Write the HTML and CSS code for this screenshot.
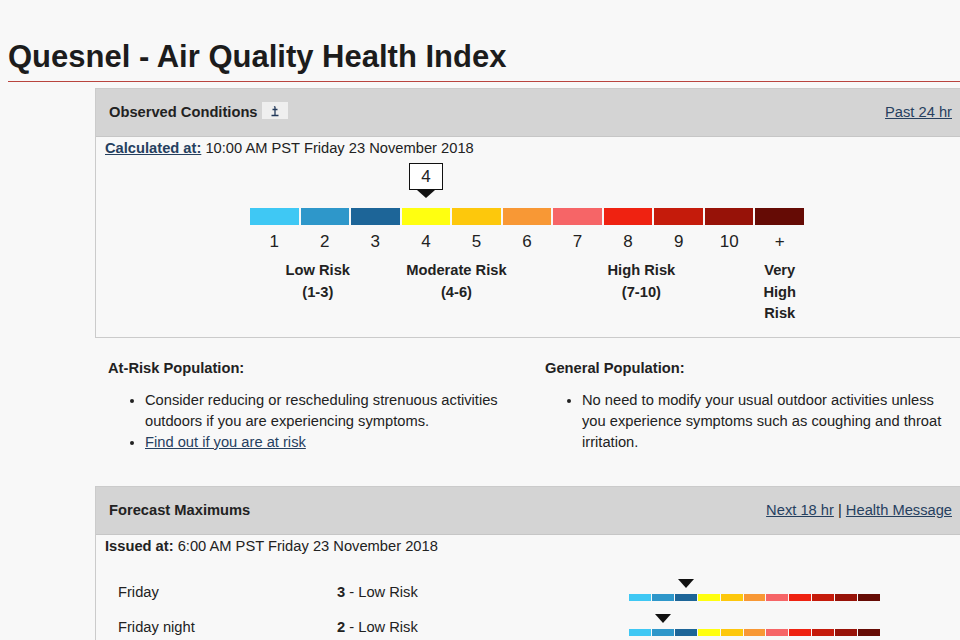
FILE: index.html
```html
<!DOCTYPE html>
<html lang="en">
<head>
  <meta charset="UTF-8">
  <meta name="viewport" content="width=device-width, initial-scale=1.0">
  <title>Quesnel - Air Quality Health Index</title>
  <link rel="stylesheet" href="styles.css">
</head>
<body>
  <div class="page">
    <h1 class="title">Quesnel - Air Quality Health Index</h1>

    <div class="content">
      <!-- observed -->
      <div class="panel">
        <div class="panel-head">
          <span class="panel-title">Observed Conditions</span>
          <span class="note-btn">
            <svg width="12" height="12" viewBox="0 0 12 12">
              <path d="M6 1.5v9M3.5 4.5h5M2.5 10.5h7M5.2 2.3l0.8-0.8" stroke="#23395a" stroke-width="1.3" fill="none"/>
            </svg>
          </span>
          <a href="#" class="panel-link">Past 24 hr</a>
        </div>
        <div class="panel-body">
          <p class="stamp"><a href="#" class="stamp-link">Calculated at:</a> 10:00 AM PST Friday 23 November 2018</p>

          <div class="scale">
            <div class="scale-row marker-row">
              <div class="marker" style="grid-column: 4">
                <div class="marker-box">4</div>
                <div class="marker-tip"></div>
              </div>
            </div>
            <div class="scale-row bar">
              <span class="c1"></span><span class="c2"></span><span class="c3"></span>
              <span class="c4"></span><span class="c5"></span><span class="c6"></span>
              <span class="c7"></span><span class="c8"></span><span class="c9"></span>
              <span class="c10"></span><span class="c11"></span>
            </div>
            <div class="scale-row numbers">
              <span>1</span><span>2</span><span>3</span><span>4</span><span>5</span><span>6</span>
              <span>7</span><span>8</span><span>9</span><span>10</span><span>+</span>
            </div>
            <div class="scale-row labels">
              <div class="label low">Low Risk<br>(1-3)</div>
              <div class="label moderate">Moderate Risk<br>(4-6)</div>
              <div class="label high">High Risk<br>(7-10)</div>
              <div class="label very-high">Very High Risk</div>
            </div>
          </div>
        </div>
      </div>

      <!-- health messages -->
      <div class="groups">
        <div class="group">
          <h2>At-Risk Population:</h2>
          <ul>
            <li>Consider reducing or rescheduling strenuous activities outdoors if you are experiencing symptoms.</li>
            <li><a href="#">Find out if you are at risk</a></li>
          </ul>
        </div>
        <div class="group">
          <h2>General Population:</h2>
          <ul>
            <li>No need to modify your usual outdoor activities unless you experience symptoms such as coughing and throat irritation.</li>
          </ul>
        </div>
      </div>

      <!-- forecast -->
      <div class="panel forecast">
        <div class="panel-head">
          <span class="panel-title">Forecast Maximums</span>
          <span class="panel-link"><a href="#">Next 18 hr</a> | <a href="#">Health Message</a></span>
        </div>
        <div class="panel-body">
          <p class="stamp"><b>Issued at:</b> 6:00 AM PST Friday 23 November 2018</p>

          <div class="fc-list">
            <div class="fc-row">
              <span>Friday</span>
              <span><b>3</b> - Low Risk</span>
              <div class="mini">
                <div class="mini-row"><span class="mini-tip" style="grid-column: 3"></span></div>
                <div class="mini-row mini-bar">
                  <span class="c1"></span><span class="c2"></span><span class="c3"></span>
                  <span class="c4"></span><span class="c5"></span><span class="c6"></span>
                  <span class="c7"></span><span class="c8"></span><span class="c9"></span>
                  <span class="c10"></span><span class="c11"></span>
                </div>
              </div>
            </div>
            <div class="fc-row">
              <span>Friday night</span>
              <span><b>2</b> - Low Risk</span>
              <div class="mini">
                <div class="mini-row"><span class="mini-tip" style="grid-column: 2"></span></div>
                <div class="mini-row mini-bar">
                  <span class="c1"></span><span class="c2"></span><span class="c3"></span>
                  <span class="c4"></span><span class="c5"></span><span class="c6"></span>
                  <span class="c7"></span><span class="c8"></span><span class="c9"></span>
                  <span class="c10"></span><span class="c11"></span>
                </div>
              </div>
            </div>
          </div>
        </div>
      </div>
    </div>
  </div>
</body>
</html>
```

FILE: styles.css
```css
html, body{
  margin: 0;
  overflow: hidden;
}
body{
  background-color: #f8f8f8;
  color: #222;
  font-family: "Liberation Sans", Arial, Helvetica, sans-serif;
  font-size: 14.7px;
  line-height: 21px;
}
a{
  color: #26405f;
}
.page{
  width: 980px;
  padding-left: 8px;
}
.title{
  margin: 39px 0 0;
  padding-bottom: 6px;
  border-bottom: 1px solid #b9443e;
  font-size: 31px;
  line-height: 36px;
  font-weight: bold;
  color: #1c1c1c;
}
.content{
  margin-left: 87px;
  width: 870px;
}

/* panels */
.panel{
  margin-top: 6px;
  border: 1px solid #cbcbcb;
}
.panel-head{
  display: flex;
  align-items: center;
  padding: 13px 12px 13px 13px;
  background-color: #d4d4d4;
  border-bottom: 1px solid #c6c6c6;
}
.panel-title{
  font-weight: bold;
}
.note-btn{
  display: flex;
  align-items: center;
  justify-content: center;
  width: 26px;
  height: 17px;
  margin-left: 4px;
  margin-top: -4px;
  background-color: #efefef;
}
.panel-link{
  margin-left: auto;
}
.panel-body{
  padding: 1px 9px 12px;
}
.stamp{
  margin: 0;
}
.stamp-link{
  font-weight: bold;
}

/* big scale */
.scale{
  margin-left: 145px;
  width: 554px;
}
.scale-row{
  display: grid;
  grid-template-columns: repeat(11, 1fr);
  column-gap: 2px;
}
.marker-row{
  margin-top: 4px;
}
.marker{
  justify-self: center;
  display: flex;
  flex-direction: column;
  align-items: center;
}
.marker-box{
  width: 34px;
  height: 27px;
  box-sizing: border-box;
  border: 1px solid #111;
  background-color: white;
  font-size: 17px;
  line-height: 25px;
  text-align: center;
}
.marker-tip{
  width: 0;
  height: 0;
  border-left: 9px solid transparent;
  border-right: 9px solid transparent;
  border-top: 8px solid #111;
}
.bar{
  margin-top: 10px;
  height: 17px;
}
.numbers{
  margin-top: 6px;
  font-size: 17px;
  text-align: center;
}
.labels{
  margin-top: 8px;
  font-weight: bold;
  line-height: 21.5px;
  text-align: center;
}
.low{
  grid-column: 1 / 4;
  padding-right: 14px;
}
.moderate{
  grid-column: 4 / 7;
  padding-right: 40px;
}
.high{
  grid-column: 7 / 11;
  padding-right: 24px;
}
.very-high{
  grid-column: 11 / 12;
}

.c1{ background-color: #3fc8f4; }
.c2{ background-color: #2e97ca; }
.c3{ background-color: #1d6598; }
.c4{ background-color: #ffff10; }
.c5{ background-color: #fdc80c; }
.c6{ background-color: #f89835; }
.c7{ background-color: #f66567; }
.c8{ background-color: #ef2211; }
.c9{ background-color: #c51b0b; }
.c10{ background-color: #971208; }
.c11{ background-color: #650b05; }

/* health messages */
.groups{
  display: grid;
  grid-template-columns: 437px 1fr;
  margin-top: 20px;
  padding: 0 10px 0 13px;
}
.group{
  padding-right: 20px;
}
.group + .group{
  padding-right: 0;
}
.group h2{
  margin: 0 0 11px;
  font-size: 14.7px;
  line-height: 21px;
}
.group ul{
  margin: 0;
  padding-left: 37px;
}

/* forecast */
.forecast{
  margin-top: 33px;
}
.fc-list{
  margin-top: 18px;
}
.fc-row{
  display: grid;
  grid-template-columns: 219px 292px 251px;
  align-items: center;
  height: 35px;
  padding-left: 13px;
}
.mini{
  display: flex;
  flex-direction: column;
  gap: 6px;
  margin-bottom: 5px;
}
.mini-row{
  display: grid;
  grid-template-columns: repeat(11, 1fr);
  column-gap: 1px;
}
.mini-tip{
  justify-self: center;
  width: 0;
  height: 0;
  border-left: 8.5px solid transparent;
  border-right: 8.5px solid transparent;
  border-top: 9px solid #111;
}
.mini-bar{
  height: 7px;
}
```
